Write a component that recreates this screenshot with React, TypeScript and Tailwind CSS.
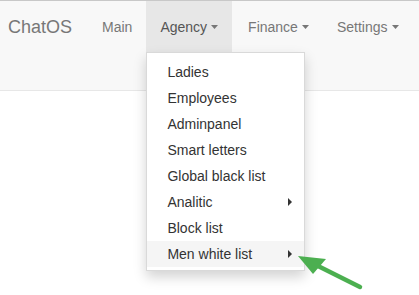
import React from "react";

const Caret = () => (
  <svg className="ml-[4px]" width="7" height="4" viewBox="0 0 7 4">
    <polygon points="0,0 7,0 3.5,4" fill="#777" />
  </svg>
);

const RightCaret = () => (
  <span className="inline-block h-0 w-0 border-y-[4px] border-l-[4px] border-y-transparent border-l-[#333]" />
);

const items: { label: string; sub?: boolean; hover?: boolean }[] = [
  { label: "Ladies" },
  { label: "Employees" },
  { label: "Adminpanel" },
  { label: "Smart letters" },
  { label: "Global black list" },
  { label: "Analitic", sub: true },
  { label: "Block list" },
  { label: "Men white list", sub: true, hover: true },
];

export default function App() {
  return (
    <div
      className="relative h-[295px] w-[419px] overflow-hidden bg-white text-[14px] leading-[20px]"
      style={{ fontFamily: '"Liberation Sans", Arial, sans-serif' }}
    >
      <div className="h-[91px] border-t border-b border-t-[#c8c8c8] border-b-[#e7e7e7] bg-[#f8f8f8]">
        <div className="flex h-[51px] items-stretch">
          <div className="flex items-center pl-[8px] pr-[16px] text-[18px] text-[#777]">ChatOS</div>
          <div className="flex items-center px-[14px] text-[#777]">Main</div>
          <div className="relative flex items-center bg-[#e7e7e7] px-[14px] text-[#555]">
            Agency
            <Caret />
            <div className="absolute left-0 top-[51px] z-10 w-[159px] border border-[rgba(0,0,0,0.15)] bg-white pt-[6px] pb-[3px] shadow-[0_6px_12px_rgba(0,0,0,0.175)]">
              {items.map((it) => (
                <div
                  key={it.label}
                  className={`flex h-[26px] items-center justify-between pl-[20px] pr-[12px] text-[#333] ${
                    it.hover ? "bg-[#f5f5f5]" : ""
                  }`}
                >
                  <span>{it.label}</span>
                  {it.sub && <RightCaret />}
                </div>
              ))}
            </div>
          </div>
          <div className="flex items-center pl-[16px] pr-[14px] text-[#777]">
            Finance
            <Caret />
          </div>
          <div className="flex items-center px-[14px] text-[#777]">
            Settings
            <Caret />
          </div>
        </div>
      </div>
      <svg
        className="pointer-events-none absolute left-0 top-0 z-20"
        width="419"
        height="295"
        viewBox="0 0 419 295"
      >
        <line x1="360" y1="287" x2="310" y2="262" stroke="#4caf50" strokeWidth="4.5" strokeLinecap="round" />
        <polygon points="298,256 326,259 313,274" fill="#4caf50" />
      </svg>
    </div>
  );
}
